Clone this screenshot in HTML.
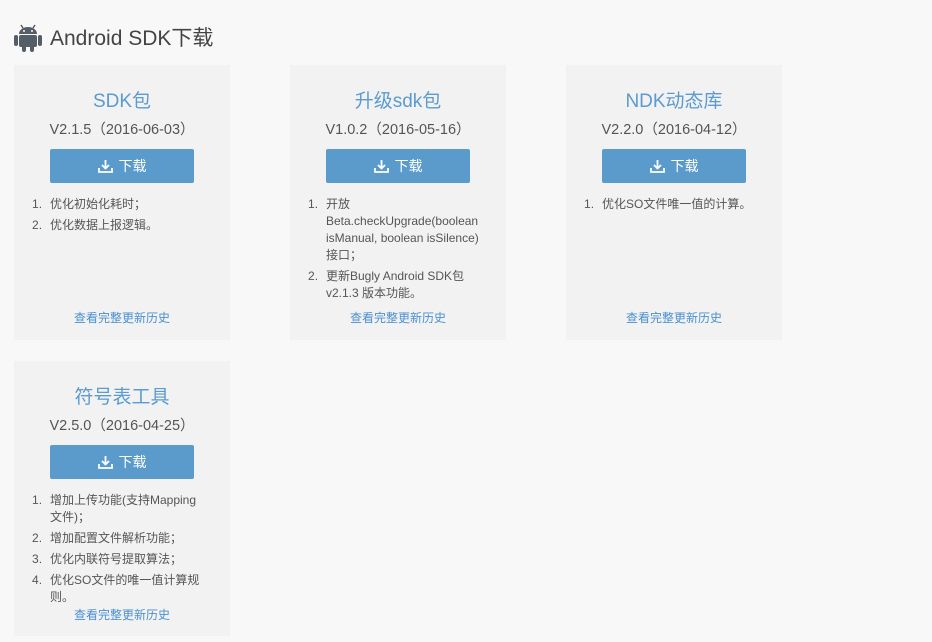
<!DOCTYPE html>
<html><head><meta charset="utf-8"><style>
body{margin:0;background:#f8f8f8;font-family:"Liberation Sans","Noto Sans CJK SC",sans-serif;color:#555;width:932px;height:642px;overflow:hidden;position:relative}
h1{position:absolute;left:14px;top:22px;margin:0;font-size:21px;font-weight:normal;color:#444;display:flex;align-items:center}
h1 svg{margin-right:8px}
.card{position:absolute;width:216px;height:275px;background:#f2f2f2}
.t{position:absolute;top:21px;width:100%;text-align:center;font-size:19px;color:#5b9bd1}
.v{position:absolute;top:53px;width:100%;text-align:center;font-size:14.5px;color:#555}
.b{position:absolute;left:36px;top:84px;width:144px;height:34px;background:#5a9bcb;border-radius:2px;color:#fff;font-size:14px;display:flex;align-items:center;justify-content:center}
.b svg{margin-right:6px}
ol{position:absolute;top:131px;left:0;margin:0;padding:0 0 0 36px;width:150px;font-size:12px;line-height:17px;color:#555;list-style:none;counter-reset:n}
ol li{margin-bottom:4px;position:relative;counter-increment:n}
ol li:before{content:counter(n) ".";position:absolute;left:-18px}
.l{position:absolute;top:244px;width:100%;text-align:center;font-size:12px;color:#4a90d0}
</style></head><body>
<h1><svg width="28" height="30" viewBox="0 0 28 30" fill="#555d66"><path d="M7 3l2 3M21 3l-2 3" stroke="#555d66" stroke-width="1.5"/><path d="M5 12a9 7 0 0 1 18 0z"/><circle cx="10" cy="9" r="1" fill="#f8f8f8"/><circle cx="18" cy="9" r="1" fill="#f8f8f8"/><rect x="5" y="13" width="18" height="12" rx="2"/><rect x="0" y="13" width="4" height="11" rx="2"/><rect x="24" y="13" width="4" height="11" rx="2"/><rect x="8" y="23" width="4" height="7" rx="2"/><rect x="16" y="23" width="4" height="7" rx="2"/></svg>Android SDK下载</h1>

<div class="card" style="left:14px;top:65px"><div class="t">SDK包</div><div class="v">V2.1.5（2016-06-03）</div>
<div class="b"><svg width="15" height="14" viewBox="0 0 15 14" fill="none" stroke="#fff" stroke-width="1.8"><path d="M7.5 1v8M4 6l3.5 3.5L11 6M1 9v4h13V9"/></svg>下载</div>
<ol><li>优化初始化耗时；</li><li>优化数据上报逻辑。</li></ol><div class="l">查看完整更新历史</div></div>

<div class="card" style="left:290px;top:65px"><div class="t">升级sdk包</div><div class="v">V1.0.2（2016-05-16）</div>
<div class="b"><svg width="15" height="14" viewBox="0 0 15 14" fill="none" stroke="#fff" stroke-width="1.8"><path d="M7.5 1v8M4 6l3.5 3.5L11 6M1 9v4h13V9"/></svg>下载</div>
<ol style="width:164px"><li>开放 Beta.checkUpgrade(boolean isManual, boolean isSilence)<br>接口；</li><li>更新Bugly Android SDK包v2.1.3 版本功能。</li></ol><div class="l">查看完整更新历史</div></div>

<div class="card" style="left:566px;top:65px"><div class="t">NDK动态库</div><div class="v">V2.2.0（2016-04-12）</div>
<div class="b"><svg width="15" height="14" viewBox="0 0 15 14" fill="none" stroke="#fff" stroke-width="1.8"><path d="M7.5 1v8M4 6l3.5 3.5L11 6M1 9v4h13V9"/></svg>下载</div>
<ol style="width:170px"><li>优化SO文件唯一值的计算。</li></ol><div class="l">查看完整更新历史</div></div>

<div class="card" style="left:14px;top:361px"><div class="t">符号表工具</div><div class="v">V2.5.0（2016-04-25）</div>
<div class="b"><svg width="15" height="14" viewBox="0 0 15 14" fill="none" stroke="#fff" stroke-width="1.8"><path d="M7.5 1v8M4 6l3.5 3.5L11 6M1 9v4h13V9"/></svg>下载</div>
<ol style="width:155px"><li>增加上传功能(支持Mapping文件)；</li><li>增加配置文件解析功能；</li><li>优化内联符号提取算法；</li><li>优化SO文件的唯一值计算规则。</li></ol><div class="l" style="top:245px">查看完整更新历史</div></div>
</body></html>
